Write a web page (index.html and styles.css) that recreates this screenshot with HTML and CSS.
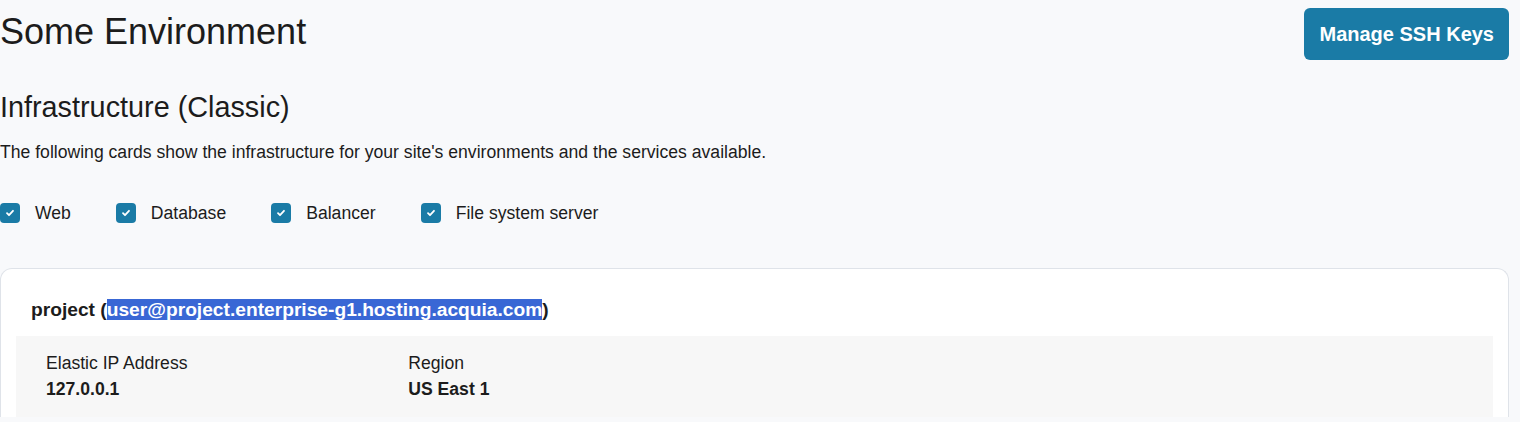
FILE: index.html
```html
<!DOCTYPE html>
<html lang="en">
<head>
  <meta charset="UTF-8">
  <meta name="viewport" content="width=device-width, initial-scale=1.0">
  <title>Some Environment</title>
  <link rel="stylesheet" href="styles.css">
</head>
<body>

<div class="page">
  <div class="page-header">
    <h1 class="title">Some Environment</h1>
    <button class="btn-primary">Manage SSH Keys</button>
  </div>

  <h2 class="subtitle">Infrastructure (Classic)</h2>
  <p class="intro">The following cards show the infrastructure for your site's environments and the services available.</p>

  <div class="filters">
    <label class="check">
      <span class="box"><svg viewBox="0 0 12 12" width="12" height="12"><path d="M3 6.2l2 2 4-4.4" fill="none" stroke="#fff" stroke-width="1.8" stroke-linecap="round" stroke-linejoin="round"/></svg></span>
      Web
    </label>
    <label class="check">
      <span class="box"><svg viewBox="0 0 12 12" width="12" height="12"><path d="M3 6.2l2 2 4-4.4" fill="none" stroke="#fff" stroke-width="1.8" stroke-linecap="round" stroke-linejoin="round"/></svg></span>
      Database
    </label>
    <label class="check">
      <span class="box"><svg viewBox="0 0 12 12" width="12" height="12"><path d="M3 6.2l2 2 4-4.4" fill="none" stroke="#fff" stroke-width="1.8" stroke-linecap="round" stroke-linejoin="round"/></svg></span>
      Balancer
    </label>
    <label class="check">
      <span class="box"><svg viewBox="0 0 12 12" width="12" height="12"><path d="M3 6.2l2 2 4-4.4" fill="none" stroke="#fff" stroke-width="1.8" stroke-linecap="round" stroke-linejoin="round"/></svg></span>
      File system server
    </label>
  </div>

  <div class="card">
    <div class="card-header">project (<span class="selected">user@project.enterprise-g1.hosting.acquia.com</span>)</div>
    <div class="card-info">
      <div class="info-item">
        <div class="info-label">Elastic IP Address</div>
        <div class="info-value">127.0.0.1</div>
      </div>
      <div class="info-item">
        <div class="info-label">Region</div>
        <div class="info-value">US East 1</div>
      </div>
    </div>
  </div>
</div>

</body>
</html>
```

FILE: styles.css
```css
body {
  margin: 0;
  background: #f8f9fb;
  color: #1c1c1c;
  font-family: "Liberation Sans", Arial, sans-serif;
}

.page {
  padding: 0 11px 0 0;
}

.page-header {
  display: flex;
  justify-content: space-between;
  align-items: flex-start;
}

.title {
  margin: 10px 0 0;
  font-size: 36px;
  line-height: 43px;
  font-weight: normal;
}

.btn-primary {
  margin-top: 8px;
  height: 52px;
  padding: 0 15px;
  background: #1a7ba6;
  color: #fff;
  border: none;
  border-radius: 6px;
  font-family: inherit;
  font-size: 20px;
  font-weight: bold;
  cursor: pointer;
}

.subtitle {
  margin: 30px 0 0;
  font-size: 28.8px;
  line-height: 34px;
  font-weight: normal;
}

.intro {
  margin: 16px 0 0;
  font-size: 17.6px;
  line-height: 24px;
}

.filters {
  display: flex;
  gap: 45px;
  margin-top: 36px;
  height: 26px;
  align-items: center;
}

.check {
  display: flex;
  align-items: center;
  gap: 15px;
  font-size: 17.6px;
}

.box {
  display: flex;
  align-items: center;
  justify-content: center;
  width: 20px;
  height: 20px;
  border-radius: 4px;
  background: #1a7ba6;
}

.card {
  margin-top: 42px;
  padding: 29px 15px 0 15px;
  background: #fff;
  border: 1px solid #dfe3e9;
  border-radius: 12px;
  border-bottom: none;
  border-bottom-left-radius: 0;
  border-bottom-right-radius: 0;
}

.card-header {
  padding-left: 15px;
  font-size: 19.2px;
  line-height: 24px;
  font-weight: bold;
}

.selected {
  background: #3967d5;
  color: #fff;
}

.card-info {
  display: grid;
  grid-template-columns: repeat(4, 1fr);
  column-gap: 32px;
  margin-top: 14px;
  padding: 14px 30px 15px;
  background: #f7f7f7;
}

.info-label {
  font-size: 17.6px;
  line-height: 26px;
}

.info-value {
  font-size: 17.6px;
  line-height: 26px;
  font-weight: bold;
}
```
